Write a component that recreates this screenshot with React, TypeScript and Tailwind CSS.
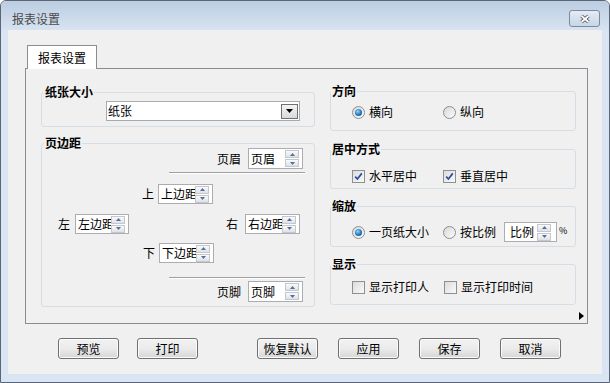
import React from "react";

const F = "font-['Noto_Sans_CJK_SC','Liberation_Sans',sans-serif]";

function Arrows() {
  return (
    <div className="flex flex-col gap-px">
      <div className="w-[14px] h-[8px] border border-[#c4c7cc] bg-linear-to-b from-[#fafafa] to-[#dfe1e4] flex items-center justify-center">
        <svg width="5" height="3" viewBox="0 0 5 3">
          <path d="M2.5 0L5 3H0z" fill="#4f6fa8" />
        </svg>
      </div>
      <div className="w-[14px] h-[8px] border border-[#c4c7cc] bg-linear-to-b from-[#fafafa] to-[#dfe1e4] flex items-center justify-center">
        <svg width="5" height="3" viewBox="0 0 5 3">
          <path d="M0 0H5L2.5 3z" fill="#4f6fa8" />
        </svg>
      </div>
    </div>
  );
}

function Spin({
  text,
  box,
  textPad,
  arrowPad,
}: {
  text: string;
  box: string;
  textPad: string;
  arrowPad: string;
}) {
  return (
    <div className={`flex items-center border border-[#abadb3] bg-white overflow-hidden ${box}`}>
      <span className={`flex-1 min-w-0 overflow-hidden whitespace-nowrap ${textPad}`}>{text}</span>
      <div className={arrowPad}>
        <Arrows />
      </div>
    </div>
  );
}

function Radio({ on }: { on?: boolean }) {
  return (
    <span className="w-[13px] h-[13px] shrink-0 rounded-full border border-[#8e8f8f] bg-linear-to-br from-[#d8d8d8] to-[#fbfbfb] flex items-center justify-center">
      {on && (
        <span className="w-[7px] h-[7px] rounded-full bg-[radial-gradient(circle_at_40%_35%,#8fd6fb,#1a6db5_60%,#0b4f8c)]" />
      )}
    </span>
  );
}

function Check({ on }: { on?: boolean }) {
  return (
    <span className="w-[13px] h-[13px] shrink-0 border border-[#8e8f8f] bg-linear-to-br from-[#dcdcdc] to-[#fafafa] flex items-center justify-center">
      {on && (
        <svg width="9" height="9" viewBox="0 0 9 9">
          <path d="M1.2 4.6L3.4 7L7.8 1.4" fill="none" stroke="#2a4c9a" strokeWidth="1.7" />
        </svg>
      )}
    </span>
  );
}

function Group({
  title,
  legendClass,
  className,
  children,
}: {
  title: string;
  legendClass: string;
  className: string;
  children: React.ReactNode;
}) {
  return (
    <fieldset className={`border border-[#d5dde5] rounded-[3px] ${className}`}>
      <legend className={`px-[1px] font-bold ${legendClass}`}>{title}</legend>
      {children}
    </fieldset>
  );
}

function Btn({ label, className = "" }: { label: string; className?: string }) {
  return (
    <button className={`w-[61px] h-[21px] border border-[#707070] rounded-[3px] bg-linear-to-b from-[#f2f2f2] via-[#ebebeb] to-[#d6d6d6] shadow-[inset_0_0_0_1px_#fbfbfb] flex items-center justify-center ${className}`}>
      {label}
    </button>
  );
}

export default function App() {
  return (
    <div className={`w-[610px] h-[383px] flex flex-col border border-[#5a6577] rounded-t-[6px] bg-[#d9e5f2] text-[12px] leading-[14px] text-black ${F}`}>
      {/* title bar */}
      <div className="h-[29px] shrink-0 flex items-start justify-between rounded-t-[5px] bg-linear-to-b from-[#bccde1] to-[#d7e3f1] pl-[11px] pr-[9px]">
        <span className="mt-[11px] text-[#4b4b4b]">报表设置</span>
        <button className="mt-[9px] w-[31px] h-[17px] rounded-[3px] border border-[#7a8aa2] bg-linear-to-b from-[#e4ecf5] to-[#c7d5e6] flex items-center justify-center">
          <svg width="12" height="10" viewBox="0 0 12 10">
            <path d="M2.5 2L9.5 8M9.5 2L2.5 8" stroke="#4a4f57" strokeWidth="3.6" />
            <path d="M2.5 2L9.5 8M9.5 2L2.5 8" stroke="#ffffff" strokeWidth="1.8" />
          </svg>
        </button>
      </div>

      {/* client */}
      <div className="mx-[7px] h-[344px] bg-[#f0f0f0] flex flex-col pt-[15px] pl-[17px]">
        <div className="relative z-10 -mb-px ml-[2px] w-[70px] h-[24px] border border-b-0 border-[#898c95] bg-white flex items-center justify-center">
          报表设置
        </div>

        <div className="w-[563px] h-[256px] border border-[#898c95] flex flex-col">
          <div className="flex items-start gap-[15px] pl-[15px] pt-[15px]">
            {/* left column */}
            <div className="flex flex-col gap-[9px] mt-[1px] w-[274px]">
              <Group title="纸张大小" legendClass="ml-[2px]" className="pt-[2px] pb-[5px]">
                <div className="ml-[64px] w-[194px] h-[20px] border border-[#a7abb0] bg-white flex items-center pl-[1px] pr-[1px]">
                  <span className="flex-1">纸张</span>
                  <div className="w-[17px] h-[15px] border border-[#707070] bg-linear-to-b from-[#f4f4f4] to-[#d9d9d9] flex items-center justify-center">
                    <svg width="7" height="4" viewBox="0 0 7 4">
                      <path d="M0 0H7L3.5 4z" fill="#000" />
                    </svg>
                  </div>
                </div>
              </Group>

              <Group title="页边距" legendClass="ml-[2px]" className="pb-[4px]">
                <div className="flex flex-col">
                  <div className="flex items-center justify-end gap-[7px] pr-[11px] -mt-[2px]">
                    <span>页眉</span>
                    <Spin text="页眉" box="w-[55px] h-[21px]" textPad="pl-[2px]" arrowPad="pr-[3px]" />
                  </div>
                  <div className="ml-[127px] mr-[9px] mt-[3px] border-t border-[#a0a0a0] border-b border-b-white" />
                  <div className="flex items-center gap-[4px] pl-[100px] mt-[10px]">
                    <span>上</span>
                    <Spin text="上边距" box="w-[55px] h-[20px]" textPad="pl-[2px]" arrowPad="pr-[3px]" />
                  </div>
                  <div className="flex items-center pl-[16px] mt-[10px]">
                    <span>左</span>
                    <Spin text="左边距" box="ml-[5px] w-[54px] h-[20px]" textPad="pl-[2px]" arrowPad="pr-[3px]" />
                    <span className="ml-[97px]">右</span>
                    <Spin text="右边距" box="ml-[7px] w-[55px] h-[20px]" textPad="pl-[2px]" arrowPad="pr-[3px]" />
                  </div>
                  <div className="flex items-center gap-[4px] pl-[101px] mt-[9px]">
                    <span>下</span>
                    <Spin text="下边距" box="w-[55px] h-[20px]" textPad="pl-[2px]" arrowPad="pr-[3px]" />
                  </div>
                  <div className="ml-[127px] mr-[9px] mt-[14px] border-t border-[#a0a0a0] border-b border-b-white" />
                  <div className="flex items-center justify-end gap-[7px] pr-[11px] mt-[2px]">
                    <span>页脚</span>
                    <Spin text="页脚" box="w-[55px] h-[21px]" textPad="pl-[2px]" arrowPad="pr-[3px]" />
                  </div>
                </div>
              </Group>
            </div>

            {/* right column */}
            <div className="flex flex-col w-[246px]">
              <Group title="方向" legendClass="ml-0" className="pt-[7px] pb-[11px]">
                <div className="flex items-center h-[14px] pl-[21px]">
                  <span className="w-[91px] flex items-center gap-[4px]">
                    <Radio on />
                    横向
                  </span>
                  <span className="flex items-center gap-[4px]">
                    <Radio />
                    纵向
                  </span>
                </div>
              </Group>

              <Group title="居中方式" legendClass="ml-0" className="mt-[11px] pt-[13px] pb-[5px]">
                <div className="flex items-center h-[14px] pl-[21px]">
                  <span className="w-[91px] flex items-center gap-[4px]">
                    <Check on />
                    水平居中
                  </span>
                  <span className="flex items-center gap-[4px]">
                    <Check on />
                    垂直居中
                  </span>
                </div>
              </Group>

              <Group title="缩放" legendClass="ml-0" className="mt-[10px] pt-[9px] pb-[4px]">
                <div className="flex items-center h-[20px] pl-[21px]">
                  <span className="w-[91px] flex items-center gap-[4px]">
                    <Radio on />
                    一页纸大小
                  </span>
                  <span className="w-[61px] flex items-center gap-[4px]">
                    <Radio />
                    按比例
                  </span>
                  <Spin text="比例" box="w-[53px] h-[20px]" textPad="pl-[5px]" arrowPad="pr-[5px]" />
                  <span className="ml-[2px] text-[9px] leading-[10px] -mt-[3px]">%</span>
                </div>
              </Group>

              <Group title="显示" legendClass="ml-0" className="mt-[10px] pt-[9px] pb-[10px]">
                <div className="flex items-center h-[14px] pl-[21px]">
                  <span className="w-[92px] flex items-center gap-[4px]">
                    <Check />
                    显示打印人
                  </span>
                  <span className="flex items-center gap-[4px]">
                    <Check />
                    显示打印时间
                  </span>
                </div>
              </Group>
            </div>
          </div>

          <div className="mt-auto flex justify-end pr-[3px] pb-[3px]">
            <svg width="5" height="8" viewBox="0 0 5 8">
              <path d="M0 0L5 4L0 8z" fill="#000" />
            </svg>
          </div>
        </div>

        {/* buttons */}
        <div className="flex items-center mt-[14px] ml-[33px]">
          <Btn label="预览" />
          <Btn label="打印" className="ml-[18px]" />
          <Btn label="恢复默认" className="ml-[59px]" />
          <Btn label="应用" className="ml-[20px]" />
          <Btn label="保存" className="ml-[20px]" />
          <Btn label="取消" className="ml-[20px]" />
        </div>
      </div>
    </div>
  );
}
